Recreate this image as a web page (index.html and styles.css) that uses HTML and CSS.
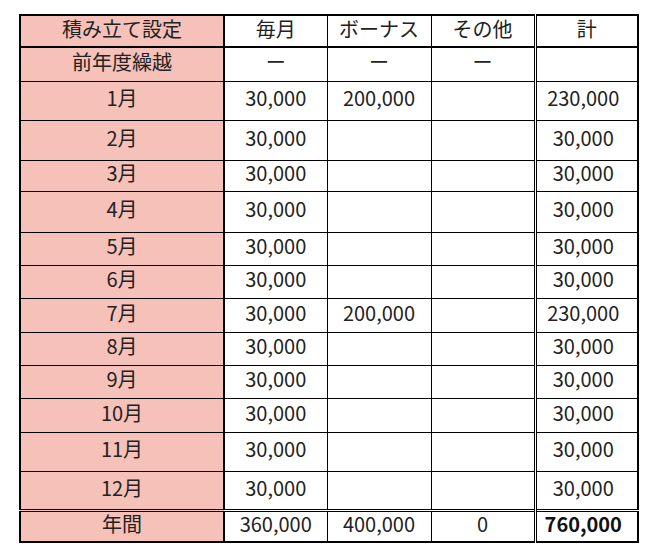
FILE: index.html
```html
<!DOCTYPE html>
<html lang="ja">
<head>
<meta charset="utf-8">
<link rel="stylesheet" href="styles.css">
</head>
<body>
<table class="plan">
  <colgroup>
    <col class="c-label"><col class="c-num"><col class="c-num2"><col class="c-num3"><col class="c-total">
  </colgroup>
  <tr class="head h32"><th class="label">積み立て設定</th><th>毎月</th><th>ボーナス</th><th>その他</th><th class="total">計</th></tr>
  <tr class="h34"><th class="label">前年度繰越</th><td>ー</td><td>ー</td><td>ー</td><td class="total"></td></tr>
  <tr class="h39"><th class="label">1月</th><td>30,000</td><td>200,000</td><td></td><td class="total">230,000</td></tr>
  <tr class="h40"><th class="label">2月</th><td>30,000</td><td></td><td></td><td class="total">30,000</td></tr>
  <tr class="h31"><th class="label">3月</th><td>30,000</td><td></td><td></td><td class="total">30,000</td></tr>
  <tr class="h41"><th class="label">4月</th><td>30,000</td><td></td><td></td><td class="total">30,000</td></tr>
  <tr class="h33"><th class="label">5月</th><td>30,000</td><td></td><td></td><td class="total">30,000</td></tr>
  <tr class="h33"><th class="label">6月</th><td>30,000</td><td></td><td></td><td class="total">30,000</td></tr>
  <tr class="h34"><th class="label">7月</th><td>30,000</td><td>200,000</td><td></td><td class="total">230,000</td></tr>
  <tr class="h33"><th class="label">8月</th><td>30,000</td><td></td><td></td><td class="total">30,000</td></tr>
  <tr class="h33"><th class="label">9月</th><td>30,000</td><td></td><td></td><td class="total">30,000</td></tr>
  <tr class="h34"><th class="label">10月</th><td>30,000</td><td></td><td></td><td class="total">30,000</td></tr>
  <tr class="h39"><th class="label">11月</th><td>30,000</td><td></td><td></td><td class="total">30,000</td></tr>
  <tr class="h39"><th class="label">12月</th><td>30,000</td><td></td><td></td><td class="total">30,000</td></tr>
  <tr class="sum h31"><th class="label">年間</th><td>360,000</td><td>400,000</td><td>0</td><td class="total grand">760,000</td></tr>
</table>
</body>
</html>
```
FILE: styles.css
```css
html, body {
  margin: 0;
  padding: 0;
  background: #ffffff;
}

body {
  font-family: "Noto Sans CJK JP", "Noto Sans", sans-serif;
  color: #222222;
}

.plan {
  border-collapse: collapse;
  margin: 14px 0 0 19px;
  table-layout: fixed;
  width: 618px;
  border: 2px solid #000;
  font-size: 20px;
  line-height: 1.2;
}

.c-label { width: 204px; }
.c-num { width: 103px; }
.c-num2 { width: 104px; }
.c-num3 { width: 104px; }
.c-total { width: 103px; }

.plan th,
.plan td {
  border: 1px solid #000;
  padding: 0 0 5px;
  text-align: center;
  vertical-align: middle;
  font-weight: normal;
  white-space: nowrap;
}

.plan .label {
  background: #f5c1b9;
  border-right: 2px solid #000;
}

.plan .head th {
  border-bottom: 2px solid #000;
}

.plan .total {
  border-left: 3px double #000;
  border-right: 2px solid #000;
  padding-right: 7px;
}

.plan .head .total {
  padding-right: 0;
}

.plan .sum th,
.plan .sum td {
  border-top: 3px double #000;
  border-bottom: 2px solid #000;
}

.plan .grand {
  font-weight: bold;
  color: #111111;
}

.h31 { height: 31px; }
.h32 { height: 32px; }
.h33 { height: 33px; }
.h34 { height: 34px; }
.h35 { height: 35px; }
.h38 { height: 38px; }
.h39 { height: 39px; }
.h40 { height: 40px; }
.h41 { height: 41px; }
```
